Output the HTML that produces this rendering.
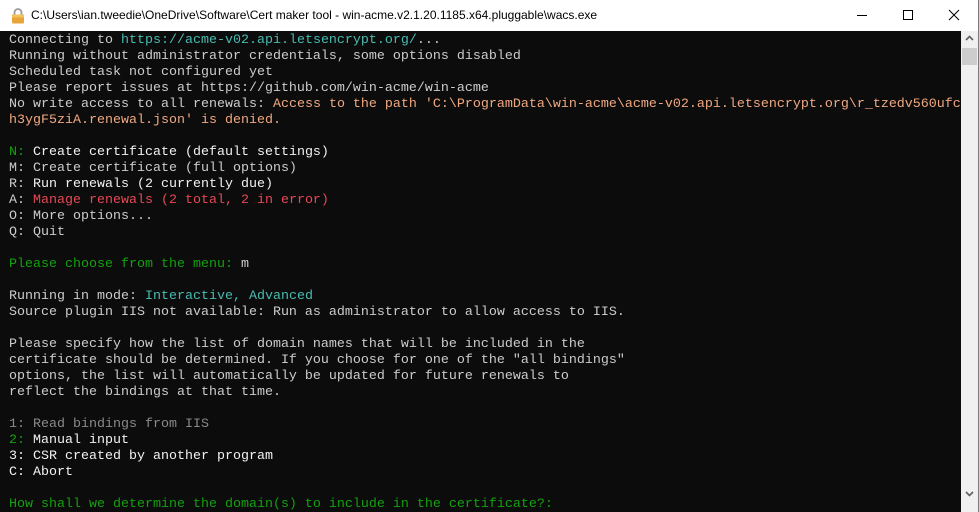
<!DOCTYPE html>
<html><head><meta charset="utf-8"><style>
html,body{margin:0;padding:0;width:979px;height:512px;overflow:hidden;background:#fff;}
.win{position:absolute;left:0;top:0;width:978px;height:511px;border-right:1px solid #7a7a7a;border-bottom:1px solid #7a7a7a;background:#fff;}
.title{position:absolute;left:0;top:0;width:978px;height:31px;background:#fff;font:12px "Liberation Sans",sans-serif;color:#000;}
.title .t{position:absolute;left:31px;top:8px;white-space:nowrap;}
.lock{position:absolute;left:11px;top:7px;}
.ctl{position:absolute;top:0;height:31px;width:46px;}
.con{position:absolute;left:0;top:31px;width:961px;height:481px;background:#0c0c0c;overflow:hidden;}
pre{margin:0;position:absolute;left:9px;top:2px;font:13.33px/16px "Liberation Mono",monospace;color:#cccccc;white-space:pre;}
.c{color:#48bcb2}.g{color:#16c60c}.r{color:#e74856}.o{color:#f0a882}.w{color:#f2f2f2}.d{color:#8a8a8a}.gg{color:#13a10e}
.sb{position:absolute;left:961px;top:31px;width:17px;height:481px;background:#f0f0f0;}
.thumb{position:absolute;left:1px;top:17px;width:15px;height:17px;background:#cdcdcd;}
</style></head><body>
<div class="win">
<div class="title">
<svg class="lock" width="14" height="17" viewBox="0 0 14 17"><path d="M3.5 8V5.5a3.5 3.5 0 0 1 7 0V8" fill="none" stroke="#9a9a9a" stroke-width="1.8"/><rect x="1" y="7.5" width="12" height="9" rx="1" fill="#e8a33a"/><rect x="1" y="7.5" width="12" height="3" fill="#f2c15a"/></svg>
<div class="t">C:\Users\ian.tweedie\OneDrive\Software\Cert maker tool - win-acme.v2.1.20.1185.x64.pluggable\wacs.exe</div>
<svg class="ctl" style="left:839px" viewBox="0 0 46 31"><line x1="18" y1="15.5" x2="28" y2="15.5" stroke="#000"/></svg>
<svg class="ctl" style="left:885px" viewBox="0 0 46 31"><rect x="18.5" y="10.5" width="9" height="9" fill="none" stroke="#000"/></svg>
<svg class="ctl" style="left:931px" viewBox="0 0 46 31"><path d="M18 10L28 20M28 10L18 20" stroke="#000"/></svg>
</div>
<div class="con"><pre>Connecting to <span class="c">https://acme-v02.api.letsencrypt.org/</span>...
Running without administrator credentials, some options disabled
Scheduled task not configured yet
Please report issues at https://github.com/win-acme/win-acme
No write access to all renewals: <span class="o">Access to the path 'C:\ProgramData\win-acme\acme-v02.api.letsencrypt.org\r_tzedv560ufc</span>
<span class="o">h3ygF5ziA.renewal.json' is denied.</span>

<span class="gg">N:</span> <span class="w">Create certificate (default settings)</span>
M: Create certificate (full options)
R: <span class="w">Run renewals (2 currently due)</span>
A: <span class="r">Manage renewals (2 total, 2 in error)</span>
O: More options...
Q: Quit

<span class="gg">Please choose from the menu:</span> m

Running in mode: <span class="c">Interactive, Advanced</span>
Source plugin IIS not available: Run as administrator to allow access to IIS.

Please specify how the list of domain names that will be included in the
certificate should be determined. If you choose for one of the "all bindings"
options, the list will automatically be updated for future renewals to
reflect the bindings at that time.

<span class="d">1: Read bindings from IIS</span>
<span class="gg">2:</span> <span class="w">Manual input</span>
<span class="w">3: CSR created by another program</span>
<span class="w">C: Abort</span>

<span class="gg">How shall we determine the domain(s) to include in the certificate?:</span></pre></div>
<div class="sb"><div class="thumb"></div>
<svg style="position:absolute;left:4px;top:4px" width="9" height="6" viewBox="0 0 9 6"><path d="M1 5L4.5 1.5L8 5" fill="none" stroke="#606060" stroke-width="1.6"/></svg>
<svg style="position:absolute;left:4px;top:460px" width="9" height="6" viewBox="0 0 9 6"><path d="M1 1L4.5 4.5L8 1" fill="none" stroke="#606060" stroke-width="1.6"/></svg>
</div>
</div>
</body></html>
